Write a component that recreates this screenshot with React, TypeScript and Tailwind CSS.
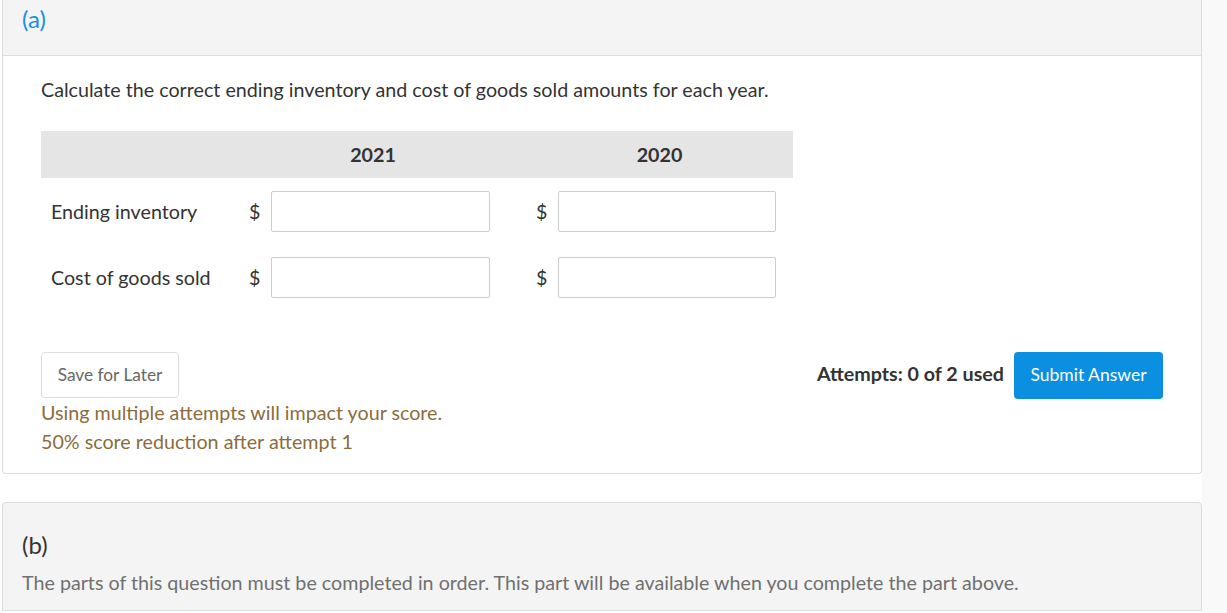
import React from 'react'

const AnswerRow = ({ label }: { label: string }) => (
  <div className="flex h-[41px] items-center">
    <div className="w-[207px] pl-[10px] text-[19.7px] text-[#333]">{label}</div>
    <div className="w-[23px] pl-[1px] text-[19.7px] text-[#333]">$</div>
    <input className="h-[41px] w-[219px] rounded-[2px] border border-[#ccc] bg-white px-2 outline-none" />
    <div className="w-[45px]" />
    <div className="w-[23px] pl-[1px] text-[19.7px] text-[#333]">$</div>
    <input className="h-[41px] w-[218px] rounded-[2px] border border-[#ccc] bg-white px-2 outline-none" />
  </div>
)

const App = () => {
  return (
    <div className="flex min-h-[613px] w-full bg-[#f9f9f9] font-['Lato',sans-serif]">
      <div className="w-[1202px] bg-white pl-[2px]">
        {/* part (a) */}
        <div className="w-[1200px] rounded-b-[4px] border border-t-0 border-[#ddd]">
          <div className="h-[56px] border-b border-[#ddd] bg-[#f4f4f4] pl-[19px] pt-[4px]">
            <span className="text-[24px] leading-[30px] text-[#1a8fe3]">(a)</span>
          </div>
          <div className="px-[38px] pb-[17px] pt-[21px]">
            <p className="text-[19.7px] leading-[26px] text-[#333]">
              Calculate the correct ending inventory and cost of goods sold amounts for each year.
            </p>
            <div className="mt-[28px] w-[752px]">
              <div className="flex h-[47px] items-center bg-[#e5e5e5] text-[19.7px] font-bold text-[#333]">
                <div className="w-[207px]" />
                <div className="w-[242px] pl-[8px] text-center">2021</div>
                <div className="w-[45px]" />
                <div className="w-[241px] pl-[8px] text-center">2020</div>
              </div>
              <div className="mt-[13px] flex flex-col gap-[25px]">
                <AnswerRow label="Ending inventory" />
                <AnswerRow label="Cost of goods sold" />
              </div>
            </div>
            <div className="mt-[54px] flex items-start justify-between">
              <div>
                <button className="h-[46px] w-[138px] rounded-[4px] border border-[#ddd] bg-white text-[17.3px] text-[#666]">
                  Save for Later
                </button>
                <div className="text-[19.7px] leading-[29px] text-[#8a6d3b]">
                  <div>Using multiple attempts will impact your score.</div>
                  <div>50% score reduction after attempt 1</div>
                </div>
              </div>
              <div className="flex items-center gap-[10px]">
                <span className="mb-[4px] text-[19.7px] font-bold text-[#333]">Attempts: 0 of 2 used</span>
                <button className="h-[47px] w-[149px] rounded-[4px] bg-[#0a8fe1] text-[17.5px] text-white">
                  Submit Answer
                </button>
              </div>
            </div>
          </div>
        </div>

        {/* part (b) */}
        <div className="mt-[28px] w-[1200px] rounded-t-[4px] border border-[#ddd] bg-[#f4f4f4] px-[19px] pb-[14px] pt-[28px]">
          <div className="text-[24px] leading-[28px] text-[#333]">(b)</div>
          <p className="mt-[11px] text-[19.7px] leading-[26px] text-[#707070]">
            The parts of this question must be completed in order. This part will be available when you complete the part above.
          </p>
        </div>
      </div>
    </div>
  )
}

export default App
